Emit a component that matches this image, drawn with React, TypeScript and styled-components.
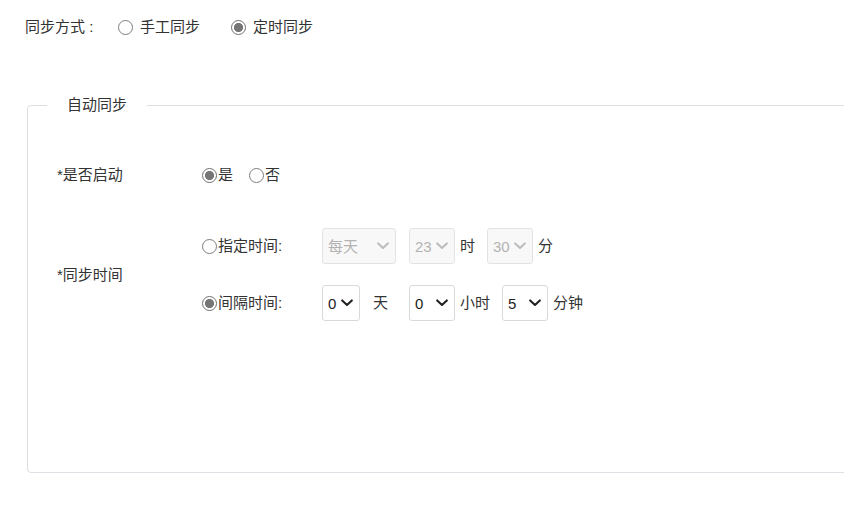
import React from "react";
import styled, { createGlobalStyle } from "styled-components";

const chevron = (color: string) =>
  `url("data:image/svg+xml;utf8,${encodeURIComponent(
    `<svg xmlns='http://www.w3.org/2000/svg' width='12' height='8' viewBox='0 0 12 8'><path d='M1.2 1.4 L6 6 L10.8 1.4' fill='none' stroke='${color}' stroke-width='2.1' stroke-linecap='round' stroke-linejoin='round'/></svg>`
  )}")`;

const GlobalStyle = createGlobalStyle`
  html, body {
    margin: 0;
    padding: 0;
    background: #ffffff;
    overflow: hidden;
  }
  body {
    font-family: "Liberation Sans", "Noto Sans CJK SC", sans-serif;
    font-size: 15px;
    color: #333333;
  }
`;

const Page = styled.div`
  width: 844px;
  height: 505px;
  overflow: hidden;
`;

const TopRow = styled.div`
  display: flex;
  align-items: center;
  height: 20px;
  margin-top: 17px;
  padding-left: 25px;
  line-height: 20px;
`;

const TopLabel = styled.span`
  width: 93px;
`;

const RadioLabel = styled.label<{ $gap?: number; $after?: number }>`
  display: inline-flex;
  align-items: center;
  gap: ${(p) => p.$gap ?? 1}px;
  margin-right: ${(p) => p.$after ?? 0}px;
  line-height: 20px;
  cursor: pointer;
`;

const Radio = styled.input.attrs({ type: "radio" })`
  appearance: none;
  -webkit-appearance: none;
  box-sizing: border-box;
  width: 15px;
  height: 15px;
  margin: 0;
  border: 1px solid #7d7d7d;
  border-radius: 50%;
  background: #ffffff;
  flex: none;
  &:checked {
    border-color: #6f6f6f;
    background: radial-gradient(circle, #767676 0 4.3px, #ffffff 4.8px);
  }
`;

const Fieldset = styled.fieldset`
  box-sizing: border-box;
  width: 860px;
  height: 378px;
  margin: 58px 0 0 27px;
  padding: 0 0 0 29px;
  border: 1px solid #dedee4;
  border-radius: 4px;
`;

const Legend = styled.legend`
  margin-left: -10px;
  padding: 0 20px;
  line-height: 20px;
  color: #333333;
`;

const Row = styled.div<{ $top: number }>`
  display: grid;
  grid-template-columns: 145px 1fr;
  align-items: center;
  margin-top: ${(p) => p.$top}px;
`;

const FieldLabel = styled.div`
  line-height: 20px;
`;

const Options = styled.div`
  display: flex;
  align-items: center;
  height: 36px;
`;

const Lines = styled.div`
  display: flex;
  flex-direction: column;
  gap: 21px;
`;

const Line = styled.div`
  display: flex;
  align-items: center;
  height: 36px;
`;

const LineLabel = styled(RadioLabel)`
  width: 120px;
`;

const Select = styled.select<{ $w: number }>`
  appearance: none;
  -webkit-appearance: none;
  box-sizing: border-box;
  width: ${(p) => p.$w}px;
  height: 36px;
  margin: 0;
  padding: 0 0 0 5px;
  border: 1px solid #d9d9d9;
  border-radius: 3px;
  background: #ffffff ${chevron("#222222")} no-repeat right 6px center / 12px 8px;
  color: #222222;
  font-family: "Liberation Sans", "Noto Sans CJK SC", sans-serif;
  font-size: 15px;
  outline: none;
  &:disabled {
    background: #f8f8f8 ${chevron("#bdbdbd")} no-repeat right 6px center / 12px 8px;
    color: #b3b3b3;
    border-color: #e3e3e3;
    opacity: 1;
  }
`;

const Unit = styled.span<{ $l?: number; $r?: number }>`
  margin: 0 ${(p) => p.$r ?? 12}px 0 ${(p) => p.$l ?? 5}px;
  line-height: 20px;
`;

export default function App() {
  return (
    <Page>
      <GlobalStyle />
      <TopRow>
        <TopLabel>同步方式 :</TopLabel>
        <RadioLabel $gap={7} $after={31}>
          <Radio name="mode" />
          手工同步
        </RadioLabel>
        <RadioLabel $gap={7}>
          <Radio name="mode" defaultChecked />
          定时同步
        </RadioLabel>
      </TopRow>

      <Fieldset>
        <Legend>自动同步</Legend>
        <Row $top={42}>
          <FieldLabel>*是否启动</FieldLabel>
          <Options>
            <RadioLabel $after={16}>
              <Radio name="enable" defaultChecked />是
            </RadioLabel>
            <RadioLabel>
              <Radio name="enable" />否
            </RadioLabel>
          </Options>
        </Row>
        <Row $top={35}>
          <FieldLabel>*同步时间</FieldLabel>
          <Lines>
            <Line>
              <LineLabel>
                <Radio name="time" />指定时间:
              </LineLabel>
              <Select $w={74} disabled defaultValue="每天">
                <option>每天</option>
              </Select>
              <Unit $l={0} $r={13} />
              <Select $w={46} disabled defaultValue="23">
                <option>23</option>
              </Select>
              <Unit>时</Unit>
              <Select $w={46} disabled defaultValue="30">
                <option>30</option>
              </Select>
              <Unit>分</Unit>
            </Line>
            <Line>
              <LineLabel>
                <Radio name="time" defaultChecked />间隔时间:
              </LineLabel>
              <Select $w={38} defaultValue="0">
                <option>0</option>
              </Select>
              <Unit $l={13} $r={21}>天</Unit>
              <Select $w={46} defaultValue="0">
                <option>0</option>
              </Select>
              <Unit>小时</Unit>
              <Select $w={46} defaultValue="5">
                <option>5</option>
              </Select>
              <Unit>分钟</Unit>
            </Line>
          </Lines>
        </Row>
      </Fieldset>
    </Page>
  );
}
